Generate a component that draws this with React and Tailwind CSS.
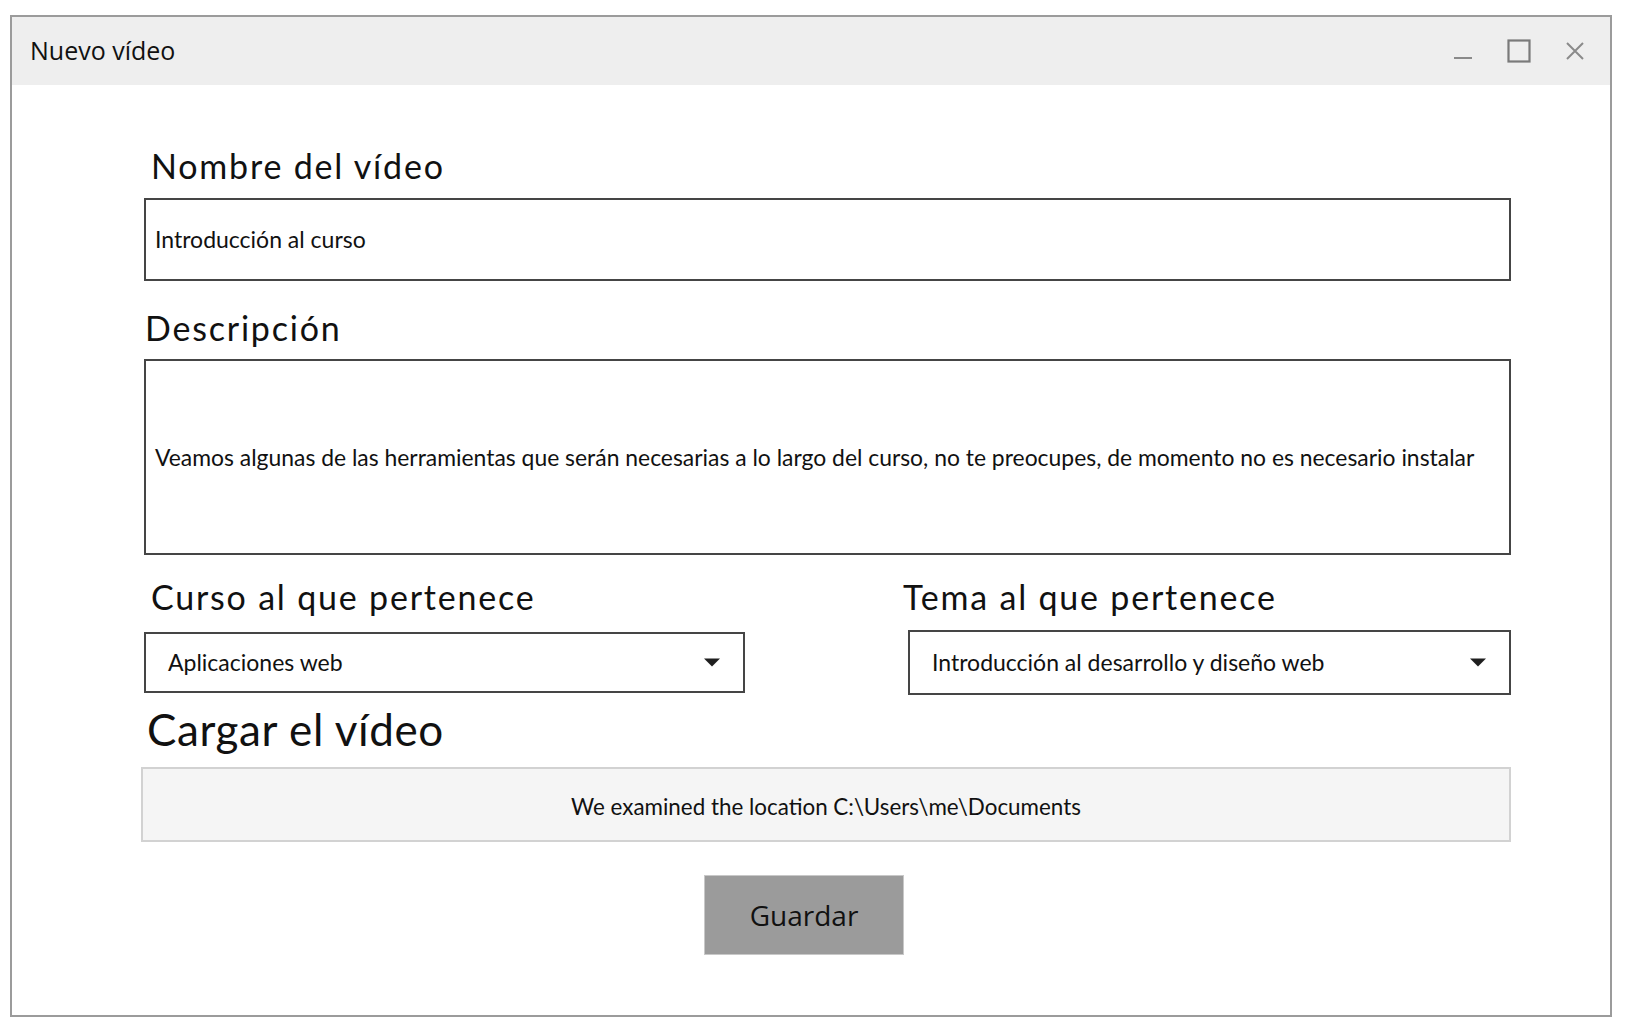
import React from 'react'

function Caret() {
    return (
        <svg width="16" height="9" viewBox="0 0 16 9" className="shrink-0">
            <path d="M0 0.5 L16 0.5 L8 8.5 Z" fill="#1f1f1f" />
        </svg>
    )
}

function Select({ value, className }) {
    return (
        <div className={`flex items-center justify-between border-2 border-[#454545] bg-white pl-[22px] pr-[23px] ${className}`}>
            <span className="text-[23px] text-[#111]">{value}</span>
            <Caret />
        </div>
    )
}

export default function App() {
    return (
        <div className="min-h-screen bg-white pt-[15px] pl-[10px]" style={{ fontFamily: 'Lato, "Open Sans", sans-serif' }}>
            <div className="w-[1602px] h-[1002px] border-2 border-[#9b9b9b] flex flex-col">
                {/* Title bar */}
                <div className="h-[68px] bg-[#eeeeee] flex items-center justify-between pl-[18px] pr-[25px] shrink-0">
                    <span className="text-[25px] text-[#111] font-['Open_Sans']">Nuevo vídeo</span>
                    <div className="flex items-center">
                        <svg width="20" height="24" viewBox="0 0 20 24" className="mr-[34px]">
                            <line x1="1" y1="19" x2="19" y2="19" stroke="#8a8a8a" strokeWidth="2" />
                        </svg>
                        <svg width="24" height="24" viewBox="0 0 24 24" className="mr-[34px]">
                            <rect x="1.5" y="1.5" width="21" height="21" fill="none" stroke="#7a7a7a" strokeWidth="2.2" />
                        </svg>
                        <svg width="20" height="20" viewBox="0 0 20 20">
                            <path d="M2 2 L18 18 M18 2 L2 18" stroke="#8a8a8a" strokeWidth="2" />
                        </svg>
                    </div>
                </div>

                {/* Form */}
                <div className="flex flex-col pl-[132px] w-[1499px]">
                    <div className="h-[52px] mt-[54px] flex items-center pl-[7px]">
                        <span className="text-[34px] tracking-[1.8px] text-[#111]">Nombre del vídeo</span>
                    </div>
                    <div className="mt-[7px] h-[83px] border-2 border-[#454545] flex items-center pl-[9px]">
                        <span className="text-[23px] text-[#111]">Introducción al curso</span>
                    </div>

                    <div className="h-[52px] mt-[20px] flex items-center pl-[1px]">
                        <span className="text-[34px] tracking-[1.8px] text-[#111]">Descripción</span>
                    </div>
                    <div className="mt-[6px] h-[196px] border-2 border-[#454545] flex items-center pl-[9px]">
                        <span className="text-[22.9px] text-[#111]">Veamos algunas de las herramientas que serán necesarias a lo largo del curso, no te preocupes, de momento no es necesario instalar</span>
                    </div>

                    <div className="flex justify-between mt-[15px]">
                        <div className="w-[601px] flex flex-col">
                            <div className="h-[52px] flex items-center pl-[7px]">
                                <span className="text-[34px] tracking-[1.8px] text-[#111]">Curso al que pertenece</span>
                            </div>
                            <Select value="Aplicaciones web" className="mt-[10px] h-[61px]" />
                        </div>
                        <div className="w-[603px] flex flex-col">
                            <div className="h-[52px] flex items-center -ml-[5px]">
                                <span className="text-[34px] tracking-[1.8px] text-[#111]">Tema al que pertenece</span>
                            </div>
                            <Select value="Introducción al desarrollo y diseño web" className="mt-[8px] h-[65px]" />
                        </div>
                    </div>

                    <div className="h-[56px] mt-[6px] flex items-center pl-[3px]">
                        <span className="text-[44px] tracking-[0.6px] text-[#111]">Cargar el vídeo</span>
                    </div>
                    <div className="mt-[10px] -ml-[3px] h-[75px] border-2 border-[#d2d2d2] bg-[#f5f5f5] flex items-center justify-center pt-[4px]">
                        <span className="text-[22.4px] text-[#111]">We examined the location C:\Users\me\Documents</span>
                    </div>

                    <div className="flex mt-[33px]">
                        <button className="ml-[560px] w-[200px] h-[80px] bg-[#9b9b9b] border border-[#c8c8c8] text-[28px] text-[#111] font-['Open_Sans']">
                            Guardar
                        </button>
                    </div>
                </div>
            </div>
        </div>
    )
}
